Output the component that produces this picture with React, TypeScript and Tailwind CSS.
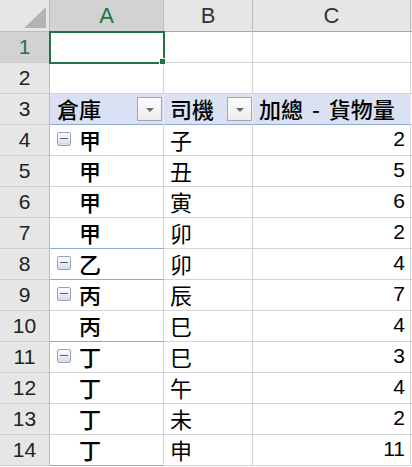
import React from "react";

type Row = {
  n: number;
  header?: boolean;
  a?: string;
  toggle?: boolean;
  b?: string;
  c?: number;
  groupEnd?: boolean;
};

const rows: Row[] = [
  { n: 1 },
  { n: 2 },
  { n: 3, header: true },
  { n: 4, a: "甲", toggle: true, b: "子", c: 2 },
  { n: 5, a: "甲", b: "丑", c: 5 },
  { n: 6, a: "甲", b: "寅", c: 6 },
  { n: 7, a: "甲", b: "卯", c: 2, groupEnd: true },
  { n: 8, a: "乙", toggle: true, b: "卯", c: 4, groupEnd: true },
  { n: 9, a: "丙", toggle: true, b: "辰", c: 7 },
  { n: 10, a: "丙", b: "巳", c: 4, groupEnd: true },
  { n: 11, a: "丁", toggle: true, b: "巳", c: 3 },
  { n: 12, a: "丁", b: "午", c: 4 },
  { n: 13, a: "丁", b: "未", c: 2 },
  { n: 14, a: "丁", b: "申", c: 11, groupEnd: true },
];

function FilterButton() {
  return (
    <div className="ml-auto flex h-[24px] w-[25px] items-start border border-[#a6a6a6] bg-gradient-to-b from-[#fdfdfd] to-[#ececec]">
      <svg width="23" height="22" className="block">
        <polygon points="8,10 16,10 12,14" fill="#6b6b6b" />
      </svg>
    </div>
  );
}

function Collapse() {
  return (
    <div className="mr-[7px] flex h-[14px] w-[14px] items-center justify-center rounded-[2px] border border-[#97a3ba] bg-gradient-to-b from-[#fdfdfd] to-[#d8dce4]">
      <div className="h-px w-[8px] bg-[#53617c]" />
    </div>
  );
}

export default function App() {
  const cjk = "font-['Noto_Sans_CJK_TC',sans-serif]";
  const num = "font-['Liberation_Sans',Arial,sans-serif]";

  return (
    <div className="h-[467px] w-[412px] overflow-hidden bg-white">
      <div className="grid grid-cols-[50px_114px_89px_158px_1px]">
        {/* column headers */}
        <div className="h-[32px] border-r border-b border-[#bcbcbc] bg-[#e6e6e6]">
          <svg width="49" height="31" className="block">
            <polygon points="46,7 46,28 24,28" fill="#b4b4b4" />
          </svg>
        </div>
        <div className={`flex h-[32px] items-center justify-center border-r border-b border-r-[#bcbcbc] border-b-[#ababab] bg-[#d2d2d2] text-[22px] text-[#217346] ${num}`}>
          A
        </div>
        <div className={`flex h-[32px] items-center justify-center border-r border-b border-r-[#bcbcbc] border-b-[#ababab] bg-[#e6e6e6] text-[22px] text-[#333] ${num}`}>
          B
        </div>
        <div className={`flex h-[32px] items-center justify-center border-r border-b border-r-[#bcbcbc] border-b-[#ababab] bg-[#e6e6e6] text-[22px] text-[#333] ${num}`}>
          C
        </div>
        <div className="h-[32px] border-b border-[#ababab] bg-[#e6e6e6]" />

        {rows.map((r) => {
          const blueA = r.header || r.groupEnd;
          return (
            <React.Fragment key={r.n}>
              <div
                className={`flex h-[31px] items-center justify-center border-r border-b border-r-[#bcbcbc] border-b-[#cfcfcf] text-[21px] ${num} ${
                  r.n === 1 ? "bg-[#d2d2d2] text-[#217346]" : "bg-[#e6e6e6] text-[#222]"
                }`}
              >
                {r.n}
              </div>

              {/* column A */}
              <div
                className={`relative flex h-[31px] items-center border-r border-b pl-[7px] text-[22px] leading-[26px] text-black ${cjk} ${
                  blueA ? "border-b-[#8ea9db]" : "border-b-[#d4d4d4]"
                } ${r.header ? "border-r-[#e9edf6] bg-[#d9e1f2] pb-[2px]" : "border-r-[#d4d4d4] pb-[3px]"}`}
              >
                {r.n === 1 && (
                  <div className="absolute -left-px -top-px z-10 h-[33px] w-[116px] border-2 border-[#217346]">
                    <div className="absolute left-[108px] top-[25px] h-[7px] w-[7px] border border-white bg-[#217346]" />
                  </div>
                )}
                {r.header && (
                  <>
                    <span className="font-medium">倉庫</span>
                    <div className="ml-auto mr-px mt-[2px]">
                      <FilterButton />
                    </div>
                  </>
                )}
                {r.a && (
                  <>
                    {r.toggle ? <Collapse /> : <div className="mr-[7px] w-[14px]" />}
                    <span className="pl-px font-medium">{r.a}</span>
                  </>
                )}
              </div>

              {/* column B */}
              <div
                className={`flex h-[31px] items-center border-r border-b pl-[6px] text-[22px] leading-[26px] text-black ${cjk} ${
                  r.header
                    ? "border-r-[#e9edf6] border-b-[#8ea9db] bg-[#d9e1f2] pb-[2px]"
                    : "border-r-[#d4d4d4] border-b-[#d4d4d4] pb-[3px]"
                }`}
              >
                {r.header && (
                  <>
                    <span className="font-medium">司機</span>
                    <div className="ml-auto mt-[2px]">
                      <FilterButton />
                    </div>
                  </>
                )}
                {r.b && <span className="font-normal">{r.b}</span>}
              </div>

              {/* column C */}
              <div
                className={`flex h-[31px] border-r border-b text-black ${
                  r.header
                    ? `items-center border-r-[#e9edf6] border-b-[#8ea9db] bg-[#d9e1f2] pb-[2px] pl-[6px] text-[22px] leading-[26px] ${cjk}`
                    : `items-end justify-end border-r-[#d4d4d4] border-b-[#d4d4d4] pb-px pr-[5px] text-[21px] ${num}`
                }`}
              >
                {r.header && (
                  <span className="whitespace-pre font-medium [word-spacing:4px]">加總 - 貨物量</span>
                )}
                {r.c !== undefined && <span>{r.c}</span>}
              </div>

              <div className="h-[31px] border-b border-[#d4d4d4]" />
            </React.Fragment>
          );
        })}
      </div>
    </div>
  );
}
